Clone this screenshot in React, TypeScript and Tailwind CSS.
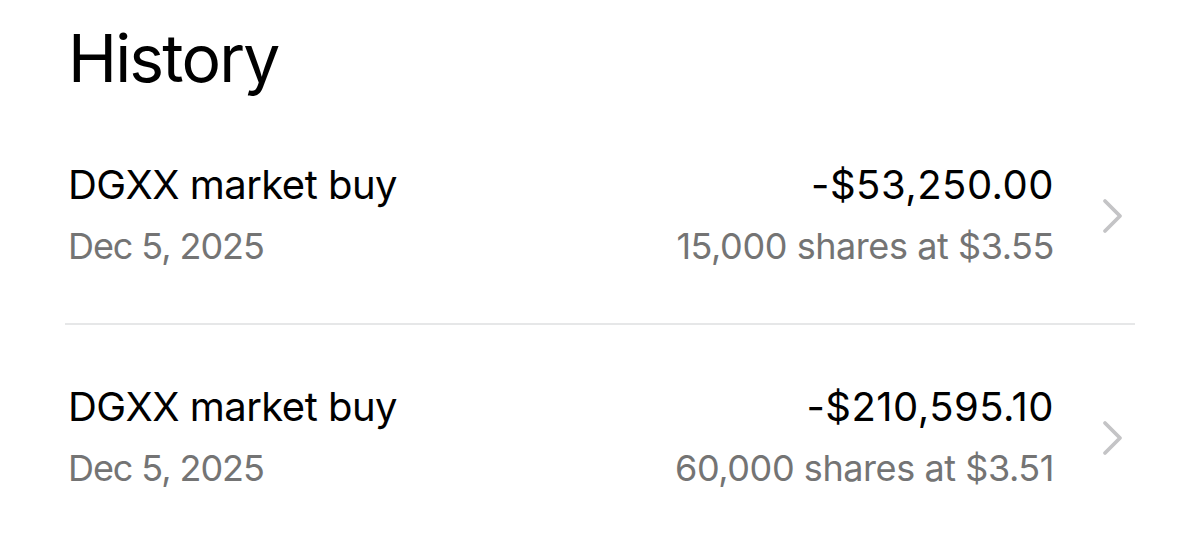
import React from 'react';

interface Trade {
    title: string;
    date: string;
    amount: string;
    detail: string;
}

const trades: Trade[] = [
    { title: 'DGXX market buy', date: 'Dec 5, 2025', amount: '-$53,250.00', detail: '15,000 shares at $3.55' },
    { title: 'DGXX market buy', date: 'Dec 5, 2025', amount: '-$210,595.10', detail: '60,000 shares at $3.51' },
];

const Chevron = () => (
    <svg width="24" height="36" viewBox="0 0 24 36" fill="none" className="shrink-0">
        <polyline points="4,3 19,18 4,33" stroke="#c4c4c6" strokeWidth="3.8" strokeLinecap="round" strokeLinejoin="round" />
    </svg>
);

const TradeRow = ({ trade }: { trade: Trade }) => (
    <div className="flex items-center pr-[75px]">
        <div className="flex-1">
            <div className="text-[40px] leading-[48px] tracking-[-0.013em] text-black">{trade.title}</div>
            <div className="mt-[13px] text-[36px] leading-[48px] tracking-[-0.03em] text-[#747474]">{trade.date}</div>
        </div>
        <div className="text-right mr-[47px]">
            <div className="text-[40px] leading-[48px] tracking-[0.012em] text-black">{trade.amount}</div>
            <div className="mt-[13px] text-[36px] leading-[48px] tracking-[-0.012em] text-[#747474]">{trade.detail}</div>
        </div>
        <Chevron />
    </div>
);

export default function App() {
    return (
        <div className="w-[1200px] h-[538px] bg-white overflow-hidden pt-[18px] pl-[68px] pr-[65px]" style={{ fontFamily: 'Inter, "Noto Sans", sans-serif' }}>
            <h1 className="text-[66px] leading-[80px] font-normal tracking-[-0.028em] text-black">History</h1>
            <div className="mt-[63px] -mr-[65px]">
                <TradeRow trade={trades[0]} />
            </div>
            <div className="mt-[53px] -ml-[3px] h-[2px] bg-[#e6e7e8]" />
            <div className="mt-[58px] -mr-[65px]">
                <TradeRow trade={trades[1]} />
            </div>
        </div>
    );
}
